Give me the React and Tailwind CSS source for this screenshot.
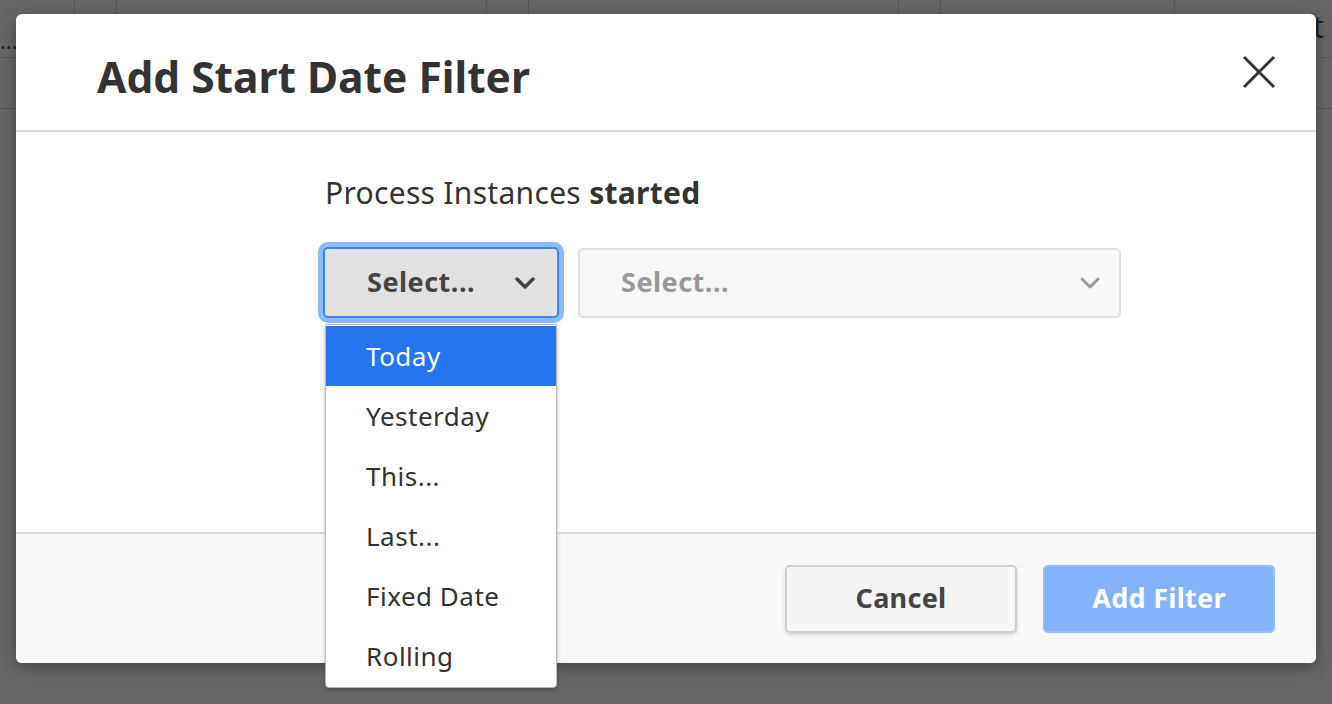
const opciones = ["Today", "Yesterday", "This...", "Last...", "Fixed Date", "Rolling"];

function Chevron({ className, grosor = 3.5 }) {
  return (
    <svg width="20" height="12" viewBox="0 0 20 12" fill="none" className={className}>
      <polyline points="2,2 10,10 18,2" stroke="currentColor" strokeWidth={grosor} strokeLinecap="round" strokeLinejoin="round" />
    </svg>
  );
}

function FondoTabla() {
  // tabla detras del overlay
  return (
    <div className="absolute inset-0 bg-[#666]">
      <div className="flex h-[58px] border-b border-[#555]">
        <div className="w-[75px] border-r border-[#555] flex items-end pb-[6px] text-[#222] text-[22px] leading-none">…</div>
        <div className="w-[42px] border-r border-[#555]" />
        <div className="w-[370px] border-r border-[#555]" />
        <div className="w-[42px] border-r border-[#555]" />
        <div className="w-[370px] border-r border-[#555]" />
        <div className="w-[42px] border-r border-[#555]" />
        <div className="w-[234px] border-r border-[#555] flex items-start justify-center pt-[6px] text-[#222] text-[24px] whitespace-nowrap">Medium</div>
        <div className="flex-1 pl-[38px] pt-[4px] text-[#222] text-[30px] whitespace-nowrap overflow-hidden">394 inst</div>
      </div>
      <div className="h-[51px] border-b border-[#555]" />
    </div>
  );
}

export default function App() {
  return (
    <div className="relative w-full h-[704px] overflow-hidden font-['Noto_Sans',sans-serif]">
      <FondoTabla />

      <div className="absolute left-[16px] top-[14px] w-[1300px] h-[649px] bg-white rounded-[6px] shadow-[0_4px_16px_rgba(0,0,0,0.35)] flex flex-col">
        {/* cabecera */}
        <div className="h-[118px] shrink-0 border-b-2 border-[#dcdcdc] flex items-center justify-between pl-[81px] pr-[40px]">
          <h2 className="text-[42.5px] font-bold text-[#333] pt-[9px] whitespace-nowrap">Add Start Date Filter</h2>
          <svg width="34" height="34" viewBox="0 0 34 34" className="text-[#333]">
            <line x1="2" y1="2" x2="32" y2="32" stroke="currentColor" strokeWidth="3" />
            <line x1="32" y1="2" x2="2" y2="32" stroke="currentColor" strokeWidth="3" />
          </svg>
        </div>

        {/* cuerpo */}
        <div className="flex-1 pl-[307px] pt-[41px]">
          <p className="text-[30px] text-[#333] leading-[40px] tracking-[0.3px] whitespace-nowrap ml-[2px]">
            Process Instances <span className="font-bold">started</span>
          </p>
          <div className="flex items-center gap-[19px] mt-[34px]">
            <div className="relative">
              <div className="w-[236px] h-[71px] rounded-[5px] border-2 border-[#3b86f5] ring-[5px] ring-[#8cbafd] bg-[#e1e1e1] flex items-center justify-between pl-[42px] pr-[22px]">
                <span className="text-[27px] font-bold text-[#444] tracking-[0.5px]">Select...</span>
                <Chevron className="text-[#444]" />
              </div>
              {/* menu desplegable */}
              <div className="absolute left-[2px] top-[77px] w-[232px] bg-white border border-[#bbb] rounded-b-[4px] shadow-[0_2px_4px_rgba(0,0,0,0.25)] z-10 py-[1px]">
                {opciones.map((op, i) => (
                  <div
                    key={op}
                    className={
                      i === 0
                        ? "h-[60px] flex items-center pl-[40px] text-[26px] tracking-[0.5px] bg-[#2574f0] text-white"
                        : "h-[60px] flex items-center pl-[40px] text-[26px] tracking-[0.5px] text-[#333]"
                    }
                  >
                    {op}
                  </div>
                ))}
              </div>
            </div>
            <div className="w-[543px] h-[70px] rounded-[5px] border-2 border-[#e0e0e0] bg-[#f7f7f7] flex items-center justify-between pl-[41px] pr-[19px]">
              <span className="text-[27px] font-bold text-[#999] tracking-[0.5px]">Select...</span>
              <Chevron className="text-[#999]" grosor={3} />
            </div>
          </div>
        </div>

        {/* pie */}
        <div className="h-[131px] shrink-0 border-t-2 border-[#dcdcdc] bg-[#f7f8fa] rounded-b-[6px] flex items-center justify-end gap-[26px] pr-[41px]">
          <button className="w-[232px] h-[68px] rounded-[5px] border-2 border-[#cfcfcf] bg-[#f5f5f5] shadow-[0_2px_4px_rgba(0,0,0,0.15)] text-[27px] font-bold text-[#444] tracking-[0.3px]">
            Cancel
          </button>
          <button className="w-[232px] h-[68px] rounded-[5px] border-2 border-[#93bffc] bg-[#84b3fb] text-[27px] font-bold text-white tracking-[0.3px]">
            Add Filter
          </button>
        </div>
      </div>
    </div>
  );
}
